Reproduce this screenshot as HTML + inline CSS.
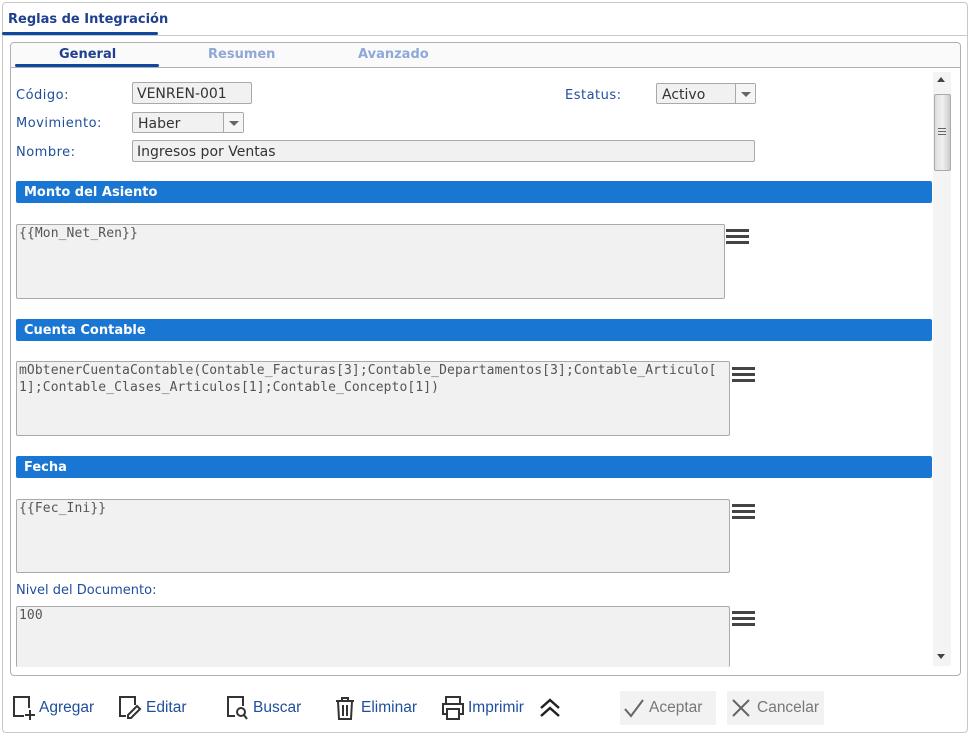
<!DOCTYPE html>
<html><head><meta charset="utf-8"><style>
*{box-sizing:border-box;margin:0;padding:0}
body{width:971px;height:736px;background:#fff;font-family:"DejaVu Sans","Liberation Sans",sans-serif;position:relative;overflow:hidden}
.a{position:absolute}
.frame{left:2px;top:2px;width:966px;height:731px;border:1px solid #c8c8c8;border-radius:4px;background:#fff}
.lbl{font-size:13px;color:#1f4e9c;letter-spacing:.5px}
.inp{background:#f1f1f1;border:1px solid #a9a9a9;border-radius:2px;font-size:14px;color:#333;padding:2px 4px 0;line-height:18px}
.arr{position:absolute;right:0;top:0;width:20px;height:100%;border-left:1px solid #a9a9a9;background:#f5f5f5}
.arr:after{content:"";position:absolute;left:5px;top:8px;border:5px solid transparent;border-top:5px solid #666;border-bottom:0}
.hdr{left:16px;width:916px;height:22px;background:#1976d2;border-radius:2px;color:#fff;font-weight:bold;font-size:13px;padding:4px 8px;font-family:"DejaVu Sans",sans-serif}
.ta{left:16px;background:#f1f1f1;border:1px solid #a9a9a9;border-radius:2px;font-family:"DejaVu Sans Mono","Liberation Mono",monospace;font-size:13px;letter-spacing:.1px;color:#555;padding:0 2px;line-height:17px;white-space:nowrap;overflow:hidden}
.ham{width:23px;height:15px;border-top:3px solid #444;border-bottom:3px solid #444}
.ham:after{content:"";display:block;margin-top:3px;height:3px;background:#444}
.tb{font-family:"Liberation Sans",sans-serif;font-size:15.5px;color:#1f4e9c;top:699px}
</style></head><body>
<div class="a frame"></div>
<div class="a" style="left:8px;top:12px;font-size:13px;font-weight:bold;color:#1f3f8f">Reglas de Integración</div>
<div class="a" style="left:2px;top:32px;width:156px;height:3px;background:#0d47a1;border-radius:2px"></div>
<div class="a" style="left:2px;top:35px;width:966px;height:1px;background:#c8c8c8"></div>
<div class="a" style="left:10px;top:42px;width:951px;height:634px;border:1px solid #b0b0b0;border-radius:4px;background:#fff"></div>
<div class="a" style="left:11px;top:43px;width:949px;height:24px;background:#fafafa;border-radius:4px 4px 0 0"></div>
<div class="a" style="left:59px;top:47px;font-size:13px;font-weight:bold;color:#1f3f8f">General</div>
<div class="a" style="left:208px;top:47px;font-size:13px;font-weight:bold;color:#8fa8d8">Resumen</div>
<div class="a" style="left:358px;top:47px;font-size:13px;font-weight:bold;color:#8fa8d8">Avanzado</div>
<div class="a" style="left:15px;top:64px;width:144px;height:3px;background:#0d47a1;border-radius:2px"></div>
<div class="a" style="left:11px;top:67px;width:949px;height:1px;background:#b0b0b0"></div>

<div class="a lbl" style="left:16px;top:88px">Código:</div>
<div class="a inp" style="left:132px;top:82px;width:120px;height:22px">VENREN-001</div>
<div class="a lbl" style="left:16px;top:116px">Movimiento:</div>
<div class="a inp" style="left:132px;top:112px;width:112px;height:21px;padding-left:5px">Haber<div class="arr"></div></div>
<div class="a lbl" style="left:16px;top:145px">Nombre:</div>
<div class="a inp" style="left:132px;top:140px;width:623px;height:22px">Ingresos por Ventas</div>
<div class="a lbl" style="left:565px;top:88px">Estatus:</div>
<div class="a inp" style="left:656px;top:83px;width:100px;height:21px;padding-left:5px">Activo<div class="arr"></div></div>

<div class="a" style="left:933px;top:72px;width:18px;height:594px;background:#f4f4f4"></div>
<div class="a" style="left:937px;top:77px;border:4px solid transparent;border-bottom:5px solid #444;border-top:0"></div>
<div class="a" style="left:934px;top:94px;width:17px;height:77px;background:linear-gradient(90deg,#ddd,#f0f0f0,#ccc);border:1px solid #aaa;border-radius:2px"></div>
<div class="a" style="left:938px;top:128px;width:8px;height:7px;border-top:1px solid #666;border-bottom:1px solid #666"></div>
<div class="a" style="left:938px;top:131px;width:8px;height:1px;background:#666"></div>
<div class="a" style="left:937px;top:654px;border:4px solid transparent;border-top:5px solid #444;border-bottom:0"></div>

<div class="a hdr" style="top:181px">Monto del Asiento</div>
<div class="a ta" style="top:224px;width:709px;height:75px">{{Mon_Net_Ren}}</div>
<div class="a ham" style="left:726px;top:229px"></div>
<div class="a hdr" style="top:319px">Cuenta Contable</div>
<div class="a ta" style="top:361px;width:714px;height:75px">mObtenerCuentaContable(Contable_Facturas[3];Contable_Departamentos[3];Contable_Articulo[<br>1];Contable_Clases_Articulos[1];Contable_Concepto[1])</div>
<div class="a ham" style="left:732px;top:367px"></div>
<div class="a hdr" style="top:456px">Fecha</div>
<div class="a ta" style="top:499px;width:714px;height:74px">{{Fec_Ini}}</div>
<div class="a ham" style="left:732px;top:504px"></div>
<div class="a lbl" style="left:16px;top:583px;letter-spacing:0">Nivel del Documento:</div>
<div class="a ta" style="top:606px;width:714px;height:61px;border-bottom:none">100</div>
<div class="a ham" style="left:732px;top:611px"></div>

<svg class="a" style="left:12px;top:695px" width="24" height="26" viewBox="0 0 24 26" fill="none" stroke="#333" stroke-width="2"><path d="M12 21H2V2h15v11"/><path d="M18 15v10M13 20h10"/></svg>
<div class="a tb" style="left:39px">Agregar</div>
<svg class="a" style="left:118px;top:695px" width="24" height="26" viewBox="0 0 24 26" fill="none" stroke="#333" stroke-width="2"><path d="M8 21H2V2h15v8"/><path d="M19 11l3 3-9 9H10v-3z"/></svg>
<div class="a tb" style="left:146px">Editar</div>
<svg class="a" style="left:226px;top:695px" width="24" height="26" viewBox="0 0 24 26" fill="none" stroke="#333" stroke-width="2"><path d="M9 21H2V2h15v9"/><circle cx="15" cy="17" r="4"/><path d="M18 20l3 4"/></svg>
<div class="a tb" style="left:253px">Buscar</div>
<svg class="a" style="left:334px;top:695px" width="22" height="26" viewBox="0 0 22 26" fill="none" stroke="#333" stroke-width="2"><path d="M2 6h18M8 6V3h6v3M4 6l1 18h12l1-18M9 10v11M13 10v11"/></svg>
<div class="a tb" style="left:361px">Eliminar</div>
<svg class="a" style="left:441px;top:695px" width="24" height="26" viewBox="0 0 24 26" fill="none" stroke="#333" stroke-width="2"><path d="M5 8V2h14v6M5 19H2V9h20v10h-3M6 14h12v10H6z"/></svg>
<div class="a tb" style="left:468px">Imprimir</div>
<svg class="a" style="left:538px;top:697px" width="24" height="22" viewBox="0 0 24 22" fill="none" stroke="#222" stroke-width="2.5"><path d="M3 11l9-8 9 8M3 19l9-8 9 8"/></svg>
<div class="a" style="left:620px;top:691px;width:96px;height:34px;background:#f2f2f2;border-radius:2px"></div>
<svg class="a" style="left:623px;top:698px" width="22" height="20" viewBox="0 0 22 20" fill="none" stroke="#666" stroke-width="2"><path d="M2 11l6 7L20 2"/></svg>
<div class="a tb" style="left:649px;color:#777">Aceptar</div>
<div class="a" style="left:727px;top:691px;width:97px;height:34px;background:#f2f2f2;border-radius:2px"></div>
<svg class="a" style="left:731px;top:698px" width="20" height="20" viewBox="0 0 20 20" fill="none" stroke="#666" stroke-width="2"><path d="M2 2l16 16M18 2L2 18"/></svg>
<div class="a tb" style="left:757px;color:#777">Cancelar</div>
</body></html>
